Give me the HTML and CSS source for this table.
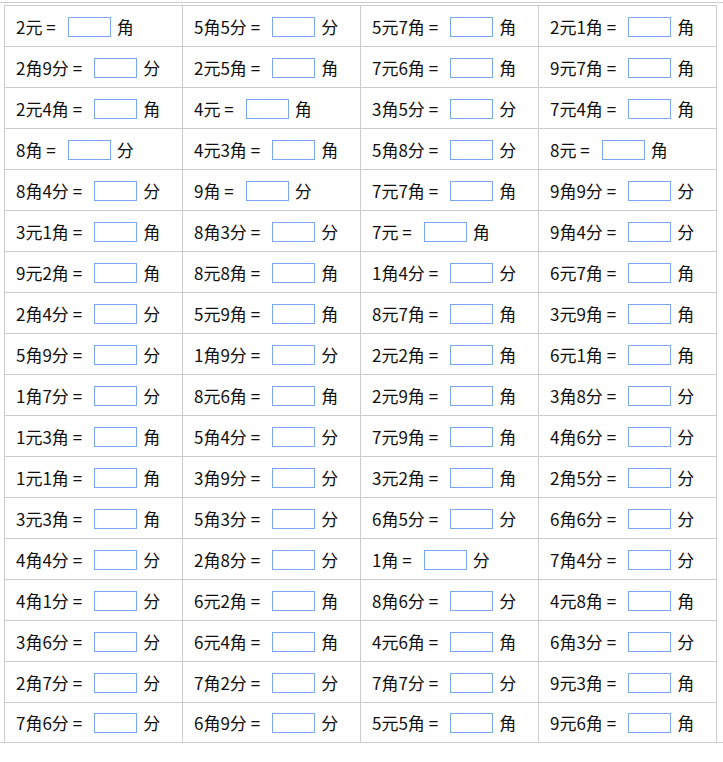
FILE: index.html
```html
<!DOCTYPE html>
<html lang="zh">
<head>
<meta charset="utf-8">
<title>元角分换算</title>
<link rel="stylesheet" href="styles.css">
</head>
<body>
<div class="wrap">
<div class="grid">
<div class="c"><span class="q">2元 =</span><input class="a" type="text"><span class="u">角</span></div>
<div class="c"><span class="q">5角5分 =</span><input class="a" type="text"><span class="u">分</span></div>
<div class="c"><span class="q">5元7角 =</span><input class="a" type="text"><span class="u">角</span></div>
<div class="c"><span class="q">2元1角 =</span><input class="a" type="text"><span class="u">角</span></div>

<div class="c"><span class="q">2角9分 =</span><input class="a" type="text"><span class="u">分</span></div>
<div class="c"><span class="q">2元5角 =</span><input class="a" type="text"><span class="u">角</span></div>
<div class="c"><span class="q">7元6角 =</span><input class="a" type="text"><span class="u">角</span></div>
<div class="c"><span class="q">9元7角 =</span><input class="a" type="text"><span class="u">角</span></div>

<div class="c"><span class="q">2元4角 =</span><input class="a" type="text"><span class="u">角</span></div>
<div class="c"><span class="q">4元 =</span><input class="a" type="text"><span class="u">角</span></div>
<div class="c"><span class="q">3角5分 =</span><input class="a" type="text"><span class="u">分</span></div>
<div class="c"><span class="q">7元4角 =</span><input class="a" type="text"><span class="u">角</span></div>

<div class="c"><span class="q">8角 =</span><input class="a" type="text"><span class="u">分</span></div>
<div class="c"><span class="q">4元3角 =</span><input class="a" type="text"><span class="u">角</span></div>
<div class="c"><span class="q">5角8分 =</span><input class="a" type="text"><span class="u">分</span></div>
<div class="c"><span class="q">8元 =</span><input class="a" type="text"><span class="u">角</span></div>

<div class="c"><span class="q">8角4分 =</span><input class="a" type="text"><span class="u">分</span></div>
<div class="c"><span class="q">9角 =</span><input class="a" type="text"><span class="u">分</span></div>
<div class="c"><span class="q">7元7角 =</span><input class="a" type="text"><span class="u">角</span></div>
<div class="c"><span class="q">9角9分 =</span><input class="a" type="text"><span class="u">分</span></div>

<div class="c"><span class="q">3元1角 =</span><input class="a" type="text"><span class="u">角</span></div>
<div class="c"><span class="q">8角3分 =</span><input class="a" type="text"><span class="u">分</span></div>
<div class="c"><span class="q">7元 =</span><input class="a" type="text"><span class="u">角</span></div>
<div class="c"><span class="q">9角4分 =</span><input class="a" type="text"><span class="u">分</span></div>

<div class="c"><span class="q">9元2角 =</span><input class="a" type="text"><span class="u">角</span></div>
<div class="c"><span class="q">8元8角 =</span><input class="a" type="text"><span class="u">角</span></div>
<div class="c"><span class="q">1角4分 =</span><input class="a" type="text"><span class="u">分</span></div>
<div class="c"><span class="q">6元7角 =</span><input class="a" type="text"><span class="u">角</span></div>

<div class="c"><span class="q">2角4分 =</span><input class="a" type="text"><span class="u">分</span></div>
<div class="c"><span class="q">5元9角 =</span><input class="a" type="text"><span class="u">角</span></div>
<div class="c"><span class="q">8元7角 =</span><input class="a" type="text"><span class="u">角</span></div>
<div class="c"><span class="q">3元9角 =</span><input class="a" type="text"><span class="u">角</span></div>

<div class="c"><span class="q">5角9分 =</span><input class="a" type="text"><span class="u">分</span></div>
<div class="c"><span class="q">1角9分 =</span><input class="a" type="text"><span class="u">分</span></div>
<div class="c"><span class="q">2元2角 =</span><input class="a" type="text"><span class="u">角</span></div>
<div class="c"><span class="q">6元1角 =</span><input class="a" type="text"><span class="u">角</span></div>

<div class="c"><span class="q">1角7分 =</span><input class="a" type="text"><span class="u">分</span></div>
<div class="c"><span class="q">8元6角 =</span><input class="a" type="text"><span class="u">角</span></div>
<div class="c"><span class="q">2元9角 =</span><input class="a" type="text"><span class="u">角</span></div>
<div class="c"><span class="q">3角8分 =</span><input class="a" type="text"><span class="u">分</span></div>

<div class="c"><span class="q">1元3角 =</span><input class="a" type="text"><span class="u">角</span></div>
<div class="c"><span class="q">5角4分 =</span><input class="a" type="text"><span class="u">分</span></div>
<div class="c"><span class="q">7元9角 =</span><input class="a" type="text"><span class="u">角</span></div>
<div class="c"><span class="q">4角6分 =</span><input class="a" type="text"><span class="u">分</span></div>

<div class="c"><span class="q">1元1角 =</span><input class="a" type="text"><span class="u">角</span></div>
<div class="c"><span class="q">3角9分 =</span><input class="a" type="text"><span class="u">分</span></div>
<div class="c"><span class="q">3元2角 =</span><input class="a" type="text"><span class="u">角</span></div>
<div class="c"><span class="q">2角5分 =</span><input class="a" type="text"><span class="u">分</span></div>

<div class="c"><span class="q">3元3角 =</span><input class="a" type="text"><span class="u">角</span></div>
<div class="c"><span class="q">5角3分 =</span><input class="a" type="text"><span class="u">分</span></div>
<div class="c"><span class="q">6角5分 =</span><input class="a" type="text"><span class="u">分</span></div>
<div class="c"><span class="q">6角6分 =</span><input class="a" type="text"><span class="u">分</span></div>

<div class="c"><span class="q">4角4分 =</span><input class="a" type="text"><span class="u">分</span></div>
<div class="c"><span class="q">2角8分 =</span><input class="a" type="text"><span class="u">分</span></div>
<div class="c"><span class="q">1角 =</span><input class="a" type="text"><span class="u">分</span></div>
<div class="c"><span class="q">7角4分 =</span><input class="a" type="text"><span class="u">分</span></div>

<div class="c"><span class="q">4角1分 =</span><input class="a" type="text"><span class="u">分</span></div>
<div class="c"><span class="q">6元2角 =</span><input class="a" type="text"><span class="u">角</span></div>
<div class="c"><span class="q">8角6分 =</span><input class="a" type="text"><span class="u">分</span></div>
<div class="c"><span class="q">4元8角 =</span><input class="a" type="text"><span class="u">角</span></div>

<div class="c"><span class="q">3角6分 =</span><input class="a" type="text"><span class="u">分</span></div>
<div class="c"><span class="q">6元4角 =</span><input class="a" type="text"><span class="u">角</span></div>
<div class="c"><span class="q">4元6角 =</span><input class="a" type="text"><span class="u">角</span></div>
<div class="c"><span class="q">6角3分 =</span><input class="a" type="text"><span class="u">分</span></div>

<div class="c"><span class="q">2角7分 =</span><input class="a" type="text"><span class="u">分</span></div>
<div class="c"><span class="q">7角2分 =</span><input class="a" type="text"><span class="u">分</span></div>
<div class="c"><span class="q">7角7分 =</span><input class="a" type="text"><span class="u">分</span></div>
<div class="c"><span class="q">9元3角 =</span><input class="a" type="text"><span class="u">角</span></div>

<div class="c"><span class="q">7角6分 =</span><input class="a" type="text"><span class="u">分</span></div>
<div class="c"><span class="q">6角9分 =</span><input class="a" type="text"><span class="u">分</span></div>
<div class="c"><span class="q">5元5角 =</span><input class="a" type="text"><span class="u">角</span></div>
<div class="c"><span class="q">9元6角 =</span><input class="a" type="text"><span class="u">角</span></div>
</div>
</div>
</body>
</html>
```

FILE: styles.css
```css
html, body {
  margin: 0;
  padding: 0;
  background: #fff;
}

body {
  font-family: "Noto Sans CJK SC", "Liberation Sans", sans-serif;
  font-size: 17px;
  color: #111;
}

.wrap {
  margin-top: 2px;
  border-top: 1px solid #ccc;
  border-bottom: 1px solid #ccc;
  padding: 2px 0 0 4px;
}

.grid {
  display: grid;
  grid-template-columns: repeat(4, 177px);
  grid-template-rows: repeat(17, 40px) 39px;
  gap: 1px;
  width: 711px;
  background: #ccc;
  border: 1px solid #ccc;
  border-bottom: none;
}

.c {
  display: flex;
  align-items: center;
  background: #fff;
  padding-left: 11px;
}

.q {
  margin-right: 12px;
}

.a {
  box-sizing: border-box;
  width: 43px;
  height: 20px;
  margin: 1px 0 0;
  padding: 0;
  border: 1px solid #7aa6f5;
  background: #fff;
}

.u {
  margin-left: 6px;
}
```
